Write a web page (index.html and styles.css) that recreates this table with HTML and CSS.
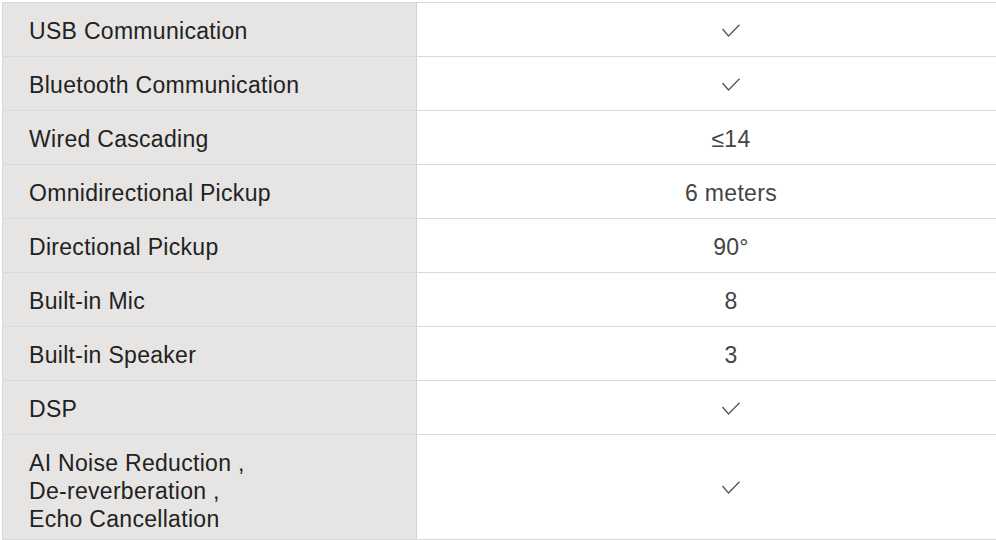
FILE: index.html
```html
<!DOCTYPE html>
<html lang="en">
<head>
<meta charset="utf-8">
<title>Specifications</title>
<link rel="stylesheet" href="styles.css">
</head>
<body>
<table class="spec">
  <tbody>
    <tr><th>USB Communication</th><td><svg class="check" viewBox="0 0 18 13"><polyline points="0.5,5 6.5,12 17.5,0.8"/></svg></td></tr>
    <tr><th>Bluetooth Communication</th><td><svg class="check" viewBox="0 0 18 13"><polyline points="0.5,5 6.5,12 17.5,0.8"/></svg></td></tr>
    <tr><th>Wired Cascading</th><td>≤14</td></tr>
    <tr><th>Omnidirectional Pickup</th><td>6 meters</td></tr>
    <tr><th>Directional Pickup</th><td>90°</td></tr>
    <tr><th>Built-in Mic</th><td>8</td></tr>
    <tr><th>Built-in Speaker</th><td>3</td></tr>
    <tr><th>DSP</th><td><svg class="check" viewBox="0 0 18 13"><polyline points="0.5,5 6.5,12 17.5,0.8"/></svg></td></tr>
    <tr class="tall"><th>AI Noise Reduction ,<br>De-reverberation ,<br>Echo Cancellation</th><td><svg class="check" viewBox="0 0 18 13"><polyline points="0.5,5 6.5,12 17.5,0.8"/></svg></td></tr>
  </tbody>
</table>
</body>
</html>
```

FILE: styles.css
```css
html, body {
  margin: 0;
  padding: 0;
  background: #ffffff;
  overflow: hidden;
}
body {
  padding: 2px 0 0 2px;
  font-family: "Liberation Sans", Arial, sans-serif;
}
.spec {
  border-collapse: collapse;
  width: 1044px;
  table-layout: fixed;
  font-size: 23px;
  letter-spacing: 0.3px;
}
.spec th, .spec td {
  border: 1px solid #d9d9d9;
  height: 49px;
  padding: 4px 0 0 0;
  vertical-align: middle;
}
.spec th {
  width: 387px;
  padding-left: 26px;
  background: #e6e5e3;
  color: #222222;
  font-weight: normal;
  text-align: left;
  border-right-color: #d2d2d2;
}
.spec td {
  text-align: center;
  color: #444444;
}
.spec td:has(.check) { padding-top: 1px; height: 52px; }
.spec .tall th { height: 96px; line-height: 28px; padding-top: 8px; }
.spec .tall td { height: 103px; }
.check {
  display: block;
  margin: 0 auto;
  width: 18px;
  height: 13px;
  fill: none;
  stroke: #555555;
  stroke-width: 1.3;
}
```
